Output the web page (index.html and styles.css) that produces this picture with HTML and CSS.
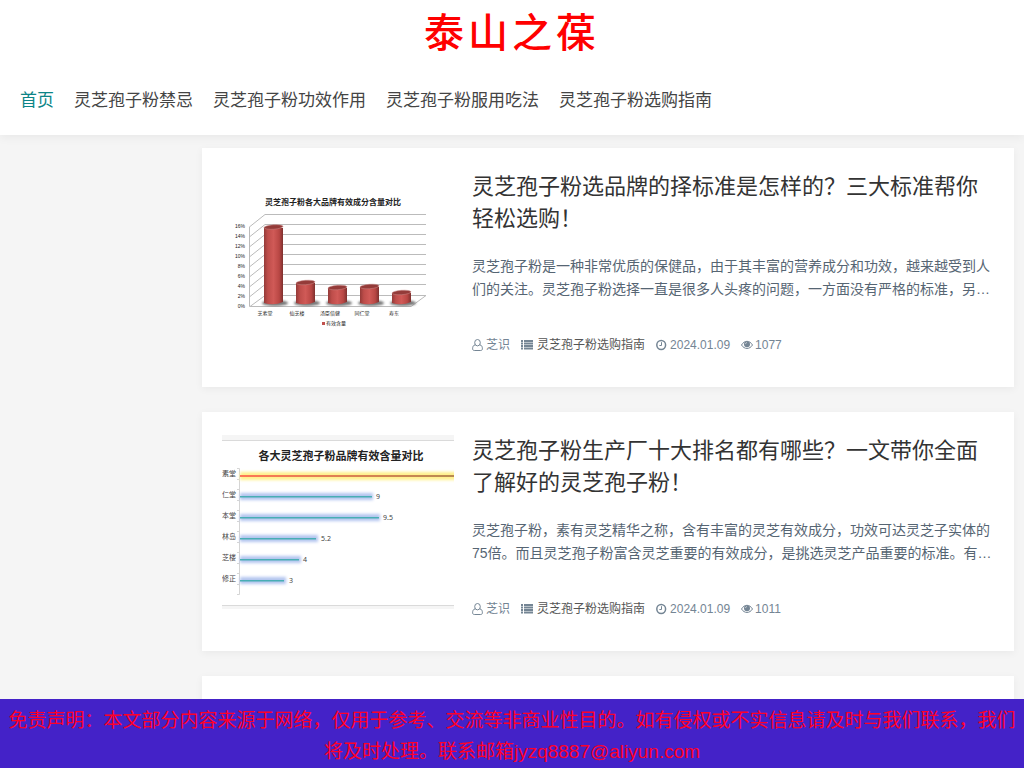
FILE: index.html
```html
<!DOCTYPE html>
<html lang="zh-CN">
<head>
<meta charset="utf-8">
<title>泰山之葆</title>
<meta name="viewport" content="width=device-width, initial-scale=1">
<link rel="stylesheet" href="styles.css">
</head>
<body>
<svg class="symbols" aria-hidden="true">
  <symbol id="icon-user" viewBox="0 0 12 14"><g fill="none" stroke="currentColor"><ellipse cx="5.5" cy="4.7" rx="2.8" ry="3.2"/><path d="M3.2 6.900C1.300 6.900.6 8.900.6 10.800c0 1.200.8 1.700 1.700 1.700h6.400c.9 0 1.700-.5 1.700-1.700 0-1.900-.7-3.900-2.600-3.900"/></g></symbol>
  <symbol id="icon-list" viewBox="0 0 12 14"><path fill="currentColor" d="M0 2h2v2H0zM3 2h9v2H3zM0 4.500h2v2H0zM3 4.500h9v2H3zM0 7h2v2H0zM3 7h9v2H3zM0 9.500h2v2H0zM3 9.500h9v2H3z"/></symbol>
  <symbol id="icon-clock" viewBox="0 0 12 14"><g fill="none" stroke="currentColor"><circle cx="5.200" cy="7" r="4.400" stroke-width="1.500"/><path d="M5.500 4.200v3.300H3.400"/></g></symbol>
  <symbol id="icon-eye" viewBox="0 0 12 14"><path fill="none" stroke="currentColor" d="M.5 7C3.300 2.100 8.700 2.100 11.500 7 8.700 11.600 3.300 11.600.5 7z"/><circle cx="6" cy="6.200" r="3" fill="currentColor"/><path fill="none" stroke="#fff" stroke-width=".6" d="M4.500 6.100c0-.9.7-1.500 1.500-1.500"/></symbol>
</svg>
<header class="header">
  <a class="logo" href="#">泰山之葆</a>
  <nav class="nav">
    <a class="active" href="#">首页</a>
    <a href="#">灵芝孢子粉禁忌</a>
    <a href="#">灵芝孢子粉功效作用</a>
    <a href="#">灵芝孢子粉服用吃法</a>
    <a href="#">灵芝孢子粉选购指南</a>
  </nav>
</header>
<main class="list">
  <article class="card">
    <a class="thumb" href="#">
      <svg viewBox="0 0 232 188" role="img" aria-label="灵芝孢子粉各大品牌有效成分含量对比">
        <defs>
          <linearGradient id="bar"><stop offset="0" stop-color="#943a38"/><stop offset=".2" stop-color="#be4d4a"/><stop offset=".5" stop-color="#d05a57"/><stop offset=".8" stop-color="#b94744"/><stop offset="1" stop-color="#7e302e"/></linearGradient>
          <filter id="soft"><feGaussianBlur stdDeviation="1"/></filter>
        </defs>
        <g transform="translate(0 7)">
        <text class="chart-title" x="111" y="27" text-anchor="middle">灵芝孢子粉各大品牌有效成分含量对比</text>
        <path class="grid" d="M28 48.500 43 36.500H204M28 58.500 43 46.500H204M28 68.500 43 56.500H204M28 78.500 43 66.500H204M28 88.500 43 76.500H204M28 98.500 43 86.500H204M28 108.500 43 96.500H204M28 118.500 43 106.500H204M28 128.500 43 117.500H204L189 128.500H27.500V48.500"/>
        <g class="scale" text-anchor="end"><text x="23" y="50">16%</text><text x="23" y="60">14%</text><text x="23" y="70">12%</text><text x="23" y="80">10%</text><text x="23" y="90">8%</text><text x="23" y="100">6%</text><text x="23" y="110">4%</text><text x="23" y="120">2%</text><text x="23" y="130">0%</text></g>
        <g fill="#777" filter="url(#soft)"><ellipse cx="53" cy="125" rx="13" ry="3"/><ellipse cx="85" cy="125" rx="13" ry="3"/><ellipse cx="117" cy="125" rx="13" ry="3"/><ellipse cx="149" cy="125" rx="13" ry="3"/><ellipse cx="181" cy="125" rx="13" ry="3"/></g>
        <g fill="url(#bar)"><path d="M42 50h19v74q-9 4-19 1z"/><path d="M74 105h19v19q-9 4-19 1z"/><path d="M106 110h19v14q-9 4-19 1z"/><path d="M138 109h19v15q-9 4-19 1z"/><path d="M170 115h19v9q-9 4-19 1z"/></g>
        <g fill="#943b39" stroke="#c88b89" stroke-width=".5"><ellipse cx="51.500" cy="49" rx="9.500" ry="2.200" transform="rotate(-4 51.500 49)"/><ellipse cx="83.500" cy="104.500" rx="9.500" ry="2.200" transform="rotate(-4 83.500 104.500)"/><ellipse cx="115.500" cy="109.500" rx="9.500" ry="2.200" transform="rotate(-4 115.500 109.500)"/><ellipse cx="147.500" cy="108.500" rx="9.500" ry="2.200" transform="rotate(-4 147.500 108.500)"/><ellipse cx="179.500" cy="114.500" rx="9.500" ry="2.200" transform="rotate(-4 179.500 114.500)"/></g>
        <g class="names" text-anchor="middle"><text x="43" y="137">芝素堂</text><text x="75" y="137">仙芝楼</text><text x="108" y="137">汤臣倍健</text><text x="140" y="137">同仁堂</text><text x="172" y="137">寿东</text><text x="114" y="147">有效含量</text></g>
        <path fill="#c0504d" d="M100 144h3v3h-3z"/>
        </g>
      </svg>
    </a>
    <div class="content">
      <h2><a href="#">灵芝孢子粉选品牌的择标准是怎样的？三大标准帮你轻松选购！</a></h2>
      <p class="summary">灵芝孢子粉是一种非常优质的保健品，由于其丰富的营养成分和功效，越来越受到人们的关注。灵芝孢子粉选择一直是很多人头疼的问题，一方面没有严格的标准，另…</p>
      <div class="meta">
        <span><svg><use href="#icon-user"/></svg>芝识</span>
        <span><svg class="wide"><use href="#icon-list"/></svg><a href="#">灵芝孢子粉选购指南</a></span>
        <span><svg><use href="#icon-clock"/></svg>2024.01.09</span>
        <span><svg><use href="#icon-eye"/></svg>1077</span>
      </div>
    </div>
  </article>
  <article class="card">
    <a class="thumb" href="#">
      <svg viewBox="0 0 232 174" role="img" aria-label="各大灵芝孢子粉品牌有效含量对比">
        <defs><filter id="glow" x="-10%" y="-100%" width="120%" height="300%"><feGaussianBlur stdDeviation="1.500"/></filter>
        <linearGradient id="gold"><stop offset="0" stop-color="#ff7655"/><stop offset="1" stop-color="#b98b50"/></linearGradient></defs>
        <path fill="#f5f5f5" d="M0 0h232v5H0zM0 171h232v3H0z"/><path stroke="#dadada" d="M0 5.500h232M0 170.500h232"/>
        <text class="bar-title" x="119" y="25" text-anchor="middle">各大灵芝孢子粉品牌有效含量对比</text>
        <path fill="none" stroke="#d5d5d5" d="M15 33.500h2.500v126H15M15 44.500h2M15 54.500h2M15 65.500h2M15 75.500h2M15 86.500h2M15 96.500h2M15 107.500h2M15 117.500h2M15 128.500h2M15 138.500h2M15 149.500h2"/>
        <path fill="#fff08a" filter="url(#glow)" d="M18 37h220v8H18z"/><path fill="url(#gold)" d="M18 40h214v2H18z"/>
        <g fill="#b3c5ef" filter="url(#glow)"><path d="M18 58h133v7H18zM18 79h140v7H18zM18 100h78v7H18zM18 121h61v7H18zM18 142h46v7H18z"/></g>
        <path fill="#48aeb5" d="M18 61h132v1.500H18zM18 82h139v1.500H18zM18 103h76v1.500H18zM18 124h59v1.500H18zM18 145h44v1.500H18z"/>
        <g class="bar-label"><text x="0" y="41">素堂</text><text x="0" y="62">仁堂</text><text x="0" y="83">本堂</text><text x="0" y="104">林岛</text><text x="0" y="125">芝楼</text><text x="0" y="146">修正</text><text x="154" y="64">9</text><text x="161" y="85">9.5</text><text x="99" y="106">5.2</text><text x="81" y="127">4</text><text x="67" y="148">3</text></g>
      </svg>
    </a>
    <div class="content">
      <h2><a href="#">灵芝孢子粉生产厂十大排名都有哪些？一文带你全面了解好的灵芝孢子粉！</a></h2>
      <p class="summary">灵芝孢子粉，素有灵芝精华之称，含有丰富的灵芝有效成分，功效可达灵芝子实体的75倍。而且灵芝孢子粉富含灵芝重要的有效成分，是挑选灵芝产品重要的标准。有…</p>
      <div class="meta">
        <span><svg><use href="#icon-user"/></svg>芝识</span>
        <span><svg class="wide"><use href="#icon-list"/></svg><a href="#">灵芝孢子粉选购指南</a></span>
        <span><svg><use href="#icon-clock"/></svg>2024.01.09</span>
        <span><svg><use href="#icon-eye"/></svg>1011</span>
      </div>
    </div>
  </article>
  <article class="card"></article>
</main>
<footer class="notice">免责声明：本文部分内容来源于网络，仅用于参考、交流等非商业性目的。如有侵权或不实信息请及时与我们联系，我们将及时处理。联系邮箱jyzq8887@aliyun.com</footer>
</body>
</html>
```
FILE: styles.css
```css
* { box-sizing: border-box; }
body { margin: 0; background: #f5f5f5; font-family: "Liberation Sans", "Noto Sans CJK SC", sans-serif; color: #333; padding-bottom: 69px; }
a { color: inherit; text-decoration: none; }
.symbols { position: absolute; width: 0; height: 0; }
.header { background: #fff; box-shadow: 0 2px 10px rgba(0, 0, 0, .06); padding-bottom: 8px; }
.logo { display: block; text-align: center; color: #f00; font: 500 40px/60px "Noto Sans CJK SC", sans-serif; letter-spacing: 4px; }
.nav { display: flex; flex-wrap: wrap; gap: 20px; padding: 14px 20px 0; font-size: 17px; line-height: 53px; color: #444; }
.nav .active { color: #0d8587; }
.list { display: flex; flex-direction: column; gap: 25px; padding: 13px 10px 0 202px; }
.card { display: flex; gap: 18px; min-height: 239px; padding: 23px 20px; background: #fff; box-shadow: 0 2px 8px rgba(0, 0, 0, .05); }
.thumb { flex: 0 0 232px; }
.thumb svg { display: block; width: 100%; }
.content { flex: 1; min-width: 0; }
h2 { margin: 0 0 20px; font-size: 22px; font-weight: 400; line-height: 32px; }
.summary { margin: 0; font-size: 14px; line-height: 23px; color: #566573; }
.meta { display: flex; flex-wrap: wrap; gap: 11px; margin-top: 34px; font-size: 12px; line-height: 20px; color: #748594; }
.meta span { display: flex; align-items: center; gap: 2px; }
.meta svg { width: 12px; height: 14px; }
.meta .wide { margin-right: 2px; }
.meta a { color: #555; }
.notice { position: fixed; left: 0; right: 0; bottom: 0; padding: 6px 8px 1px; background: #4422c8; color: #ff0029; font-size: 19px; line-height: 31px; text-align: center; }
.chart-title { font: 700 8px "Liberation Serif", "Noto Sans CJK SC", serif; fill: #222; }
.grid { fill: none; stroke: #bbb; }
.scale, .names { font: 5px "Liberation Sans", "Noto Sans CJK SC", sans-serif; fill: #222; }
.bar-title { font: 700 11px "Noto Sans CJK SC", sans-serif; fill: #222; }
.bar-label { font: 7px "Noto Sans", "Noto Sans CJK SC", sans-serif; fill: #444; }
```
